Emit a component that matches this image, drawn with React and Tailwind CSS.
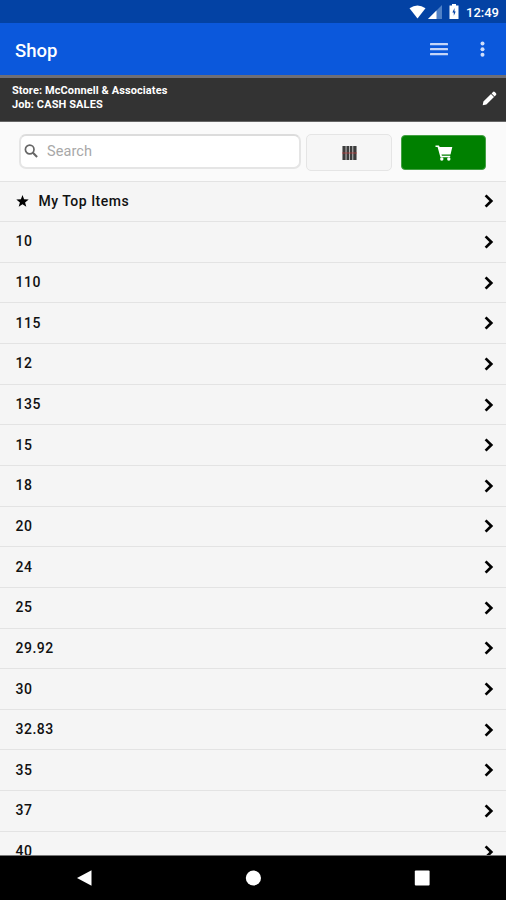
import { useState } from "react";

const categories = [
  "10", "110", "115", "12", "135", "15", "18", "20", "24",
  "25", "29.92", "30", "32.83", "35", "37", "40",
];

export default function App() {
  const [search, setSearch] = useState("");

  return (
    <div className="flex h-[900px] w-[506px] flex-col overflow-hidden bg-[#f5f5f5] font-['Roboto','Liberation_Sans',sans-serif] text-[#111]">
      <StatusBar />

      {/* Title bar */}
      <header className="flex h-[52px] shrink-0 items-center bg-[#0b58dc] pl-[15px] pr-[19px] text-white">
        <h1 className="flex-1 pt-1 text-[18.5px] font-medium leading-none">Shop</h1>
        <button type="button" aria-label="Menu" className="mr-[30px]">
          <svg width="18" height="14" viewBox="0 0 18 14" fill="#c5d5f8">
            <rect y="1" width="18" height="2.3" rx="0.5" />
            <rect y="6" width="18" height="2.3" rx="0.5" />
            <rect y="11" width="18" height="2.3" rx="0.5" />
          </svg>
        </button>
        <button type="button" aria-label="More">
          <svg width="9" height="16" viewBox="0 0 9 16" fill="#d0defa">
            <circle cx="4.5" cy="2.5" r="2" />
            <circle cx="4.5" cy="8.2" r="2" />
            <circle cx="4.5" cy="13.8" r="2" />
          </svg>
        </button>
      </header>

      {/* Store and job */}
      <div className="flex h-[47px] shrink-0 items-center border-b border-t-[3px] border-b-[#666] border-t-[#6e6e76] bg-[#333] pl-3 pr-[9px] text-white">
        <div className="flex-1 pb-1 text-[11px] font-bold leading-[14px] tracking-[0.1px]">
          <p>Store: McConnell &amp; Associates</p>
          <p>Job: CASH SALES</p>
        </div>
        <button type="button" aria-label="Edit" className="mb-0.5">
          <svg width="15" height="15" viewBox="0 0 15 15" fill="#fff">
            <path d="M0.7 14.3 1.4 10.6 9 3l3 3-7.6 7.6zM9.6 2.4 11 1q.9-.8 1.8 0L14 2.2q.8.9 0 1.8l-1.4 1.4z" />
          </svg>
        </button>
      </div>

      {/* Search row */}
      <div className="flex h-[58.5px] shrink-0 items-center bg-[#fafafa] px-[19px]">
        <label className="flex h-[35px] w-[282px] shrink-0 items-center rounded-[7px] border-2 border-t-[#dcdcdc] border-[#e5e5e5] bg-white pl-[3px]">
          <svg width="14" height="14" viewBox="0 0 14 14" fill="none" stroke="#666">
            <circle cx="5.7" cy="5.5" r="4.3" strokeWidth="1.7" />
            <path d="m8.9 8.8 4.2 4.1" strokeWidth="2.1" />
          </svg>
          <input
            type="text"
            value={search}
            onChange={(e) => setSearch(e.target.value)}
            placeholder="Search"
            className="ml-[9px] w-[230px] text-[14.5px] leading-none tracking-[0.1px] outline-none placeholder:text-[#a8a8a8]"
          />
        </label>
        <button
          type="button"
          aria-label="Scan barcode"
          className="ml-[5px] mt-[3px] flex h-[37px] w-[86px] shrink-0 items-center justify-center rounded-[5px] border border-[#e5e5e5] bg-[#f6f6f6]"
        >
          <svg width="15" height="14" viewBox="0 0 15 14">
            <rect width="15" height="14" fill="#b5b5b5" />
            <g fill="#3c3c3c">
              <rect x="0.7" width="2.8" height="14" />
              <rect x="4.6" width="2.4" height="14" />
              <rect x="8" width="2.2" height="14" />
              <rect x="11.3" width="3" height="14" />
            </g>
            <rect y="6.4" width="15" height="1.2" fill="#c43a3a" opacity="0.6" />
          </svg>
        </button>
        <button
          type="button"
          aria-label="Cart"
          className="ml-[9px] mt-[3px] flex h-[35px] w-[85px] shrink-0 items-center justify-center rounded-[4px] border border-[#43a043] bg-[#008000]"
        >
          <svg width="18" height="16" viewBox="0 0 18 16" fill="#fff">
            <path d="M0.5 0.5h3.4l.8 1.4h12.6l-1.8 7.6H6.5l.4 1.3h8.3v1.5H5.4L2.6 2H.5z" />
            <circle cx="6.8" cy="14" r="1.7" />
            <circle cx="13.8" cy="14" r="1.7" />
          </svg>
        </button>
      </div>

      {/* Item list */}
      <ul className="min-h-0 flex-1 overflow-hidden border-b border-[#777]">
        <Row>
          <svg width="13" height="12" viewBox="0 0 13 12" className="mb-px mr-2.5">
            <path d="m6.5 0 1.6 4.2 4.6.3L9.1 7.4l1.2 4.4-3.8-2.5-3.8 2.5 1.2-4.4L.3 4.5l4.6-.3z" />
          </svg>
          My Top Items
        </Row>
        {categories.map((name) => (
          <Row key={name}>{name}</Row>
        ))}
      </ul>

      <NavBar />
    </div>
  );
}

function Row({ children }) {
  return (
    <li className="flex h-[40.65px] items-center border-t border-[#e3e3e3] pl-[15.5px] pr-3 text-[14px] font-medium tracking-[0.5px]">
      <span className="flex flex-1 items-center">{children}</span>
      <svg width="10" height="14" viewBox="0 0 10 14" fill="none" stroke="#000" strokeWidth="2.7">
        <path d="m1.6 1.4 5.7 5.6-5.7 5.6" />
      </svg>
    </li>
  );
}

function StatusBar() {
  return (
    <div className="flex h-[23px] shrink-0 items-center justify-end bg-[#0342a4] pr-[7px] text-white">
      <svg width="17" height="14" viewBox="0 0 17 14" fill="#fff">
        <path d="M8.5 13.5.5 3.2Q8.5-2 16.5 3.2z" />
      </svg>
      <svg width="14" height="14" viewBox="0 0 14 14" className="ml-0.5">
        <path d="M14 0v14H0z" fill="#4f80c6" />
        <path d="M8.5 5.5V14H0z" fill="#fff" />
      </svg>
      <svg width="10" height="15" viewBox="0 0 10 15" className="ml-[7px]">
        <path d="M3 0h4v1.5h2.5V15h-9V1.5H3z" fill="#fff" />
        <path d="M5.5 4 3.4 8.5h1.4v3.3L6.7 7.4H5.5z" fill="#0342a4" />
      </svg>
      <span className="ml-[7px] pt-px text-[13px] font-medium leading-none">12:49</span>
    </div>
  );
}

function NavBar() {
  return (
    <nav className="flex h-11 shrink-0 items-center justify-around bg-black">
      <svg width="16" height="16" viewBox="0 0 16 16" fill="#fff">
        <path d="M15.5 .2v15.6L1 8z" />
      </svg>
      <svg width="16" height="16" viewBox="0 0 16 16" fill="#fff">
        <circle cx="8.4" cy="8" r="7.6" />
      </svg>
      <svg width="16" height="16" viewBox="0 0 16 16" fill="#fff">
        <rect x="0.8" y="0.6" width="14.8" height="14.8" rx="1" />
      </svg>
    </nav>
  );
}
